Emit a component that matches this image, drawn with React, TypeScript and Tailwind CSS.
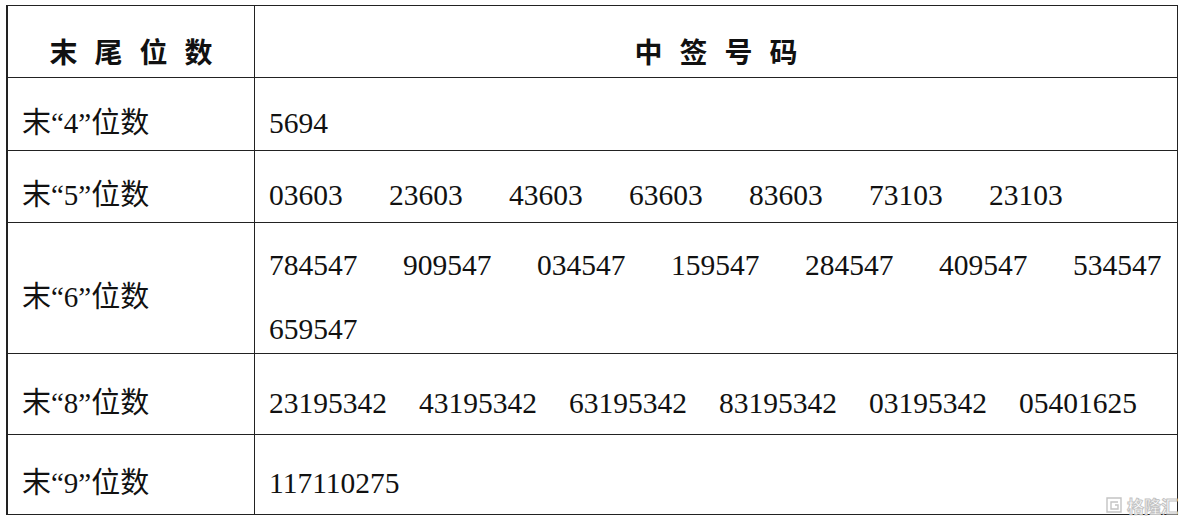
const SERIF = "font-['Liberation_Serif','Noto_Sans_CJK_SC',serif]";

type Row = { label: string; h: string; step: string; lines: string[][] };

const ROWS: Row[] = [
  { label: "末“4”位数", h: "h-[73px]", step: "w-[120px]", lines: [["5694"]] },
  {
    label: "末“5”位数",
    h: "h-[72px]",
    step: "w-[120px]",
    lines: [["03603", "23603", "43603", "63603", "83603", "73103", "23103"]],
  },
  {
    label: "末“6”位数",
    h: "h-[131px]",
    step: "w-[134px]",
    lines: [
      ["784547", "909547", "034547", "159547", "284547", "409547", "534547"],
      ["659547"],
    ],
  },
  {
    label: "末“8”位数",
    h: "h-[81px]",
    step: "w-[150px]",
    lines: [["23195342", "43195342", "63195342", "83195342", "03195342", "05401625"]],
  },
  { label: "末“9”位数", h: "h-[80px]", step: "w-[150px]", lines: [["117110275"]] },
];

function Spaced({ text }: { text: string }) {
  return (
    <div className="flex gap-[17px]">
      {text.split("").map((c, i) => (
        <span key={i}>{c}</span>
      ))}
    </div>
  );
}

function Watermark() {
  return (
    <div className="absolute right-[4px] bottom-[8px] flex items-center gap-[3px] text-[#d4d4d4]">
      <svg width="20" height="18" viewBox="0 0 20 18" fill="none" stroke="#c4c4c4" strokeWidth="1.4">
        <path d="M3 2h14v14H3z" />
        <path d="M14 6H7v7h7v-4h-3" />
      </svg>
      <span className="font-['Noto_Sans_CJK_SC',sans-serif] text-[17px] leading-none font-bold text-white [-webkit-text-stroke:1px_#c4c4c4]">
        格隆汇
      </span>
    </div>
  );
}

export default function App() {
  return (
    <div className="relative w-[1182px] h-[522px] bg-white pt-[5px] pl-[6px]">
      <div className={`w-[1172px] border-t border-l-2 border-r border-[#222] text-[#111] ${SERIF}`}>
        {/* header */}
        <div className="flex h-[72px] border-b border-[#222]">
          <div className="w-[247px] shrink-0 border-r border-[#222] flex items-center justify-center pt-[18px] font-['Noto_Sans_CJK_SC',sans-serif] font-bold text-[28px] leading-none">
            <Spaced text="末尾位数" />
          </div>
          <div className="flex-1 flex items-center justify-center pt-[18px] font-['Noto_Sans_CJK_SC',sans-serif] font-bold text-[28px] leading-none">
            <Spaced text="中签号码" />
          </div>
        </div>

        {ROWS.map((r) => (
          <div key={r.label} className={`flex ${r.h} border-b border-[#222]`}>
            <div className="w-[247px] shrink-0 border-r border-[#222] flex items-center pl-[14px] pt-[18px] text-[29px] leading-none">
              {r.label}
            </div>
            <div className="flex-1 flex flex-col justify-center gap-[35px] pl-[14px] pt-[18px] text-[29.5px] leading-[29px]">
              {r.lines.map((line, li) => (
                <div key={li} className="flex">
                  {line.map((n, i) => (
                    <span key={n} className={i === line.length - 1 ? "" : `${r.step} shrink-0`}>
                      {n}
                    </span>
                  ))}
                </div>
              ))}
            </div>
          </div>
        ))}
      </div>
      <Watermark />
    </div>
  );
}
